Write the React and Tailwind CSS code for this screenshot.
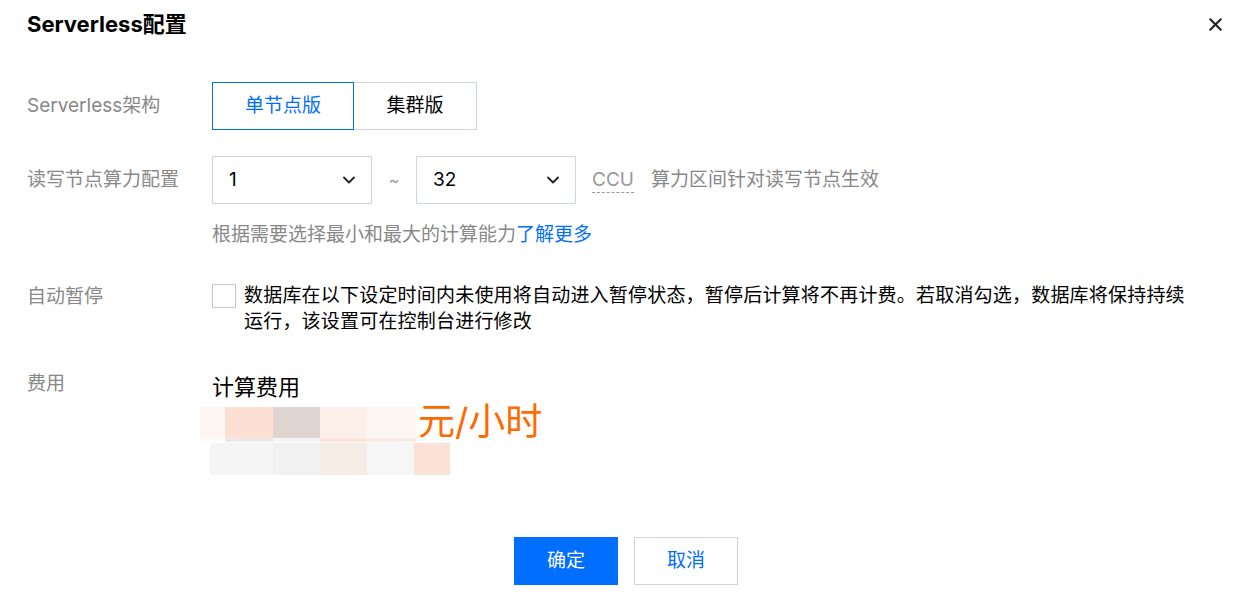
import { ChevronDown, X } from 'lucide-react';

const font = { fontFamily: 'Inter, "Noto Sans CJK SC", sans-serif' };

function Select({ value }) {
  return (
    <div className="flex h-[48px] w-[160px] items-center justify-between border border-[#cfd5de] bg-white pl-[16px] pr-[12px] text-[19px] text-black">
      <span>{value}</span>
      <ChevronDown size={20} strokeWidth={2.2} className="text-[#222]" />
    </div>
  );
}

function Label({ children, className = '' }) {
  return (
    <div className={`w-[185px] shrink-0 text-[19px] leading-[26px] text-[#888888] ${className}`}>
      {children}
    </div>
  );
}

export default function App() {
  return (
    <div style={font} className="h-[600px] w-[1242px] overflow-hidden bg-white pl-[27px]">
      <div className="flex items-center justify-between pr-[16px] pt-[10px]">
        <h1 className="text-[22px] font-bold leading-[28px] text-black">Serverless配置</h1>
        <X size={21} strokeWidth={2.4} className="text-[#222]" />
      </div>

      <div className="mt-[44px] flex items-center">
        <Label>Serverless架构</Label>
        <div className="flex text-[19px]">
          <button className="relative z-10 h-[48px] w-[142px] border border-[#006eff] bg-white text-[#006eff]">
            单节点版
          </button>
          <button className="-ml-px h-[48px] w-[124px] border border-[#cfd5de] bg-white text-black">
            集群版
          </button>
        </div>
      </div>

      <div className="mt-[26px] flex items-center">
        <Label>读写节点算力配置</Label>
        <Select value="1" />
        <span className="w-[44px] text-center text-[16px] text-[#999]">~</span>
        <Select value="32" />
        <span className="ml-[16px] border-b border-dashed border-[#999] text-[19px] leading-[24px] text-[#999]">CCU</span>
        <span className="ml-[17px] text-[19px] text-[#888]">算力区间针对读写节点生效</span>
      </div>

      <div className="mt-[18px] pl-[185px] text-[19px] leading-[26px] text-[#888]">
        根据需要选择最小和最大的计算能力<span className="text-[#006eff]">了解更多</span>
      </div>

      <div className="mt-[35px] flex items-start">
        <Label className="mt-[1px]">自动暂停</Label>
        <div className="mt-[1px] h-[24px] w-[24px] shrink-0 border border-[#c4c9d0] bg-white" />
        <p className="ml-[8px] w-[950px] text-[19px] leading-[26px] tracking-[0.2px] text-black">
          数据库在以下设定时间内未使用将自动进入暂停状态，暂停后计算将不再计费。若取消勾选，数据库将保持持续运行，该设置可在控制台进行修改
        </p>
      </div>

      <div className="mt-[36px] flex items-start">
        <Label>费用</Label>
        <div className="flex flex-col">
          <div className="mt-[2px] text-[22px] leading-[28px] text-black">计算费用</div>
          <div className="-ml-[12px] mt-[1px] flex items-end">
            <div className="flex flex-col">
              <div className="flex h-[31px]">
                <div className="w-[25px] bg-[#fdf6f3]" />
                <div className="w-[48px] bg-[#fde0d3]" />
                <div className="w-[47px] bg-[#ded5d0]" />
                <div className="w-[47px] bg-[#fdf0ea]" />
                <div className="w-[49px] bg-[#fdf7f4]" />
              </div>
              <div className="flex h-[4px]">
                <div className="w-[25px] bg-[#fcfcfc]" />
                <div className="w-[48px] bg-[#e8e8e8]" />
                <div className="w-[47px] bg-[#f5f5f5]" />
                <div className="w-[47px] bg-[#fbe5da]" />
                <div className="w-[49px] bg-[#f8ebe5]" />
              </div>
            </div>
            <span className="ml-[2px] text-[37px] leading-[40px] text-[#ff6a00]">元/小时</span>
          </div>
          <div className="-ml-[2px] mt-[1px] flex h-[32px]">
            <div className="w-[63px] bg-[#f5f5f5]" />
            <div className="w-[47px] bg-[#f1f1f1]" />
            <div className="w-[47px] bg-[#f6ece6]" />
            <div className="w-[47px] bg-[#f6f6f6]" />
            <div className="w-[36px] bg-[#fbe1d6]" />
          </div>
        </div>
      </div>

      <div className="mt-[62px] flex justify-center gap-[16px] pr-[17px]">
        <button className="h-[48px] w-[104px] bg-[#006eff] text-[19px] text-white">确定</button>
        <button className="h-[48px] w-[104px] border border-[#cfd5de] bg-white text-[19px] text-[#006eff]">取消</button>
      </div>
    </div>
  );
}
